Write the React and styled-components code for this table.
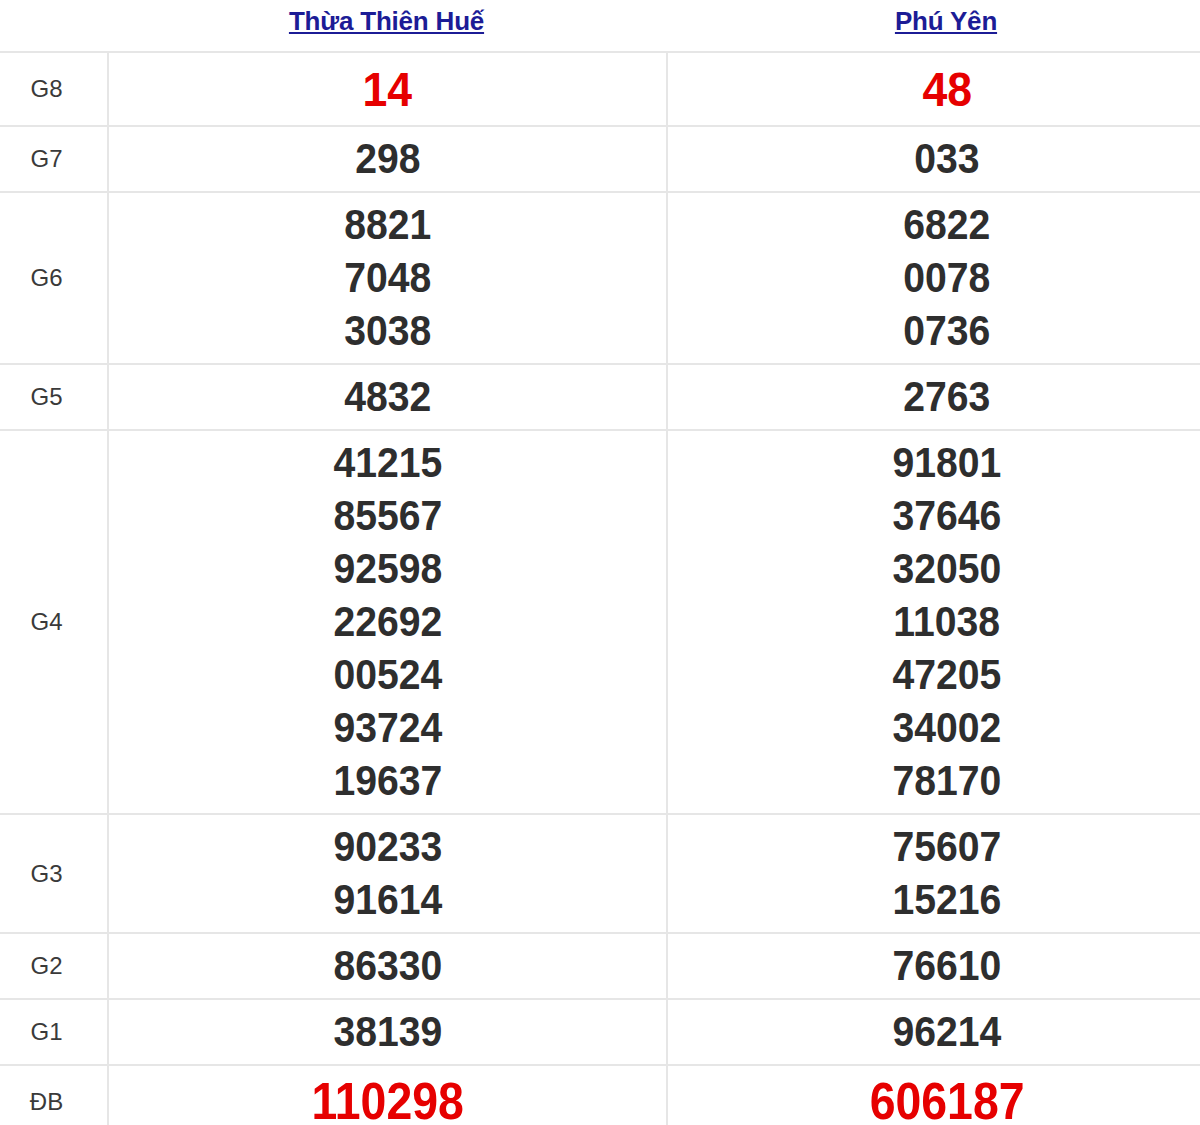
import React from "react";
import styled, { createGlobalStyle } from "styled-components";

const GlobalStyle = createGlobalStyle`
  html, body {
    margin: 0;
    padding: 0;
    background: #fff;
    overflow: hidden;
  }
  body {
    font-family: "Liberation Sans", Arial, sans-serif;
  }
`;

const Table = styled.div`
  width: 1226px;
  display: flex;
  flex-direction: column;
`;

const Row = styled.div`
  display: grid;
  grid-template-columns: 107px 559px 560px;
  border-bottom: 2px solid #e6e6e6;
`;

const HeaderRow = styled(Row)`
  height: 51px;
`;

const HeadCell = styled.div`
  display: flex;
  justify-content: center;
  padding-top: 6px;
`;

const ProvinceLink = styled.a.attrs({
  href: "#",
  onClick: (evt) => {
    evt.preventDefault();
  },
})`
  color: #1c1c96;
  font-size: 26px;
  font-weight: 700;
  line-height: 30px;
  letter-spacing: -0.2px;
  text-decoration: underline;
  text-underline-offset: 2px;
`;

const Label = styled.div`
  display: flex;
  align-items: center;
  justify-content: center;
  padding-right: 14px;
  font-size: 24px;
  color: #3a3a3a;
`;

const Cell = styled.div`
  display: flex;
  flex-direction: column;
  align-items: center;
  justify-content: center;
  border-left: 2px solid #e6e6e6;
  padding: ${(p) => (p.$big ? "5px 0" : "5px 0 6px")};
`;

const Num = styled.span`
  display: block;
  font-weight: 700;
  font-size: ${(p) => (p.$size ? p.$size : 43)}px;
  line-height: ${(p) => (p.$big ? 62 : 53)}px;
  color: ${(p) => (p.$red ? "#e60000" : "#2e2e2e")};
  transform: scaleX(0.91);
`;

const provinces = ["Thừa Thiên Huế", "Phú Yên"];

const prizes = [
  { name: "G8", values: [["14"], ["48"]], red: true, size: 49, big: true },
  { name: "G7", values: [["298"], ["033"]] },
  { name: "G6", values: [["8821", "7048", "3038"], ["6822", "0078", "0736"]] },
  { name: "G5", values: [["4832"], ["2763"]] },
  {
    name: "G4",
    values: [
      ["41215", "85567", "92598", "22692", "00524", "93724", "19637"],
      ["91801", "37646", "32050", "11038", "47205", "34002", "78170"],
    ],
  },
  { name: "G3", values: [["90233", "91614"], ["75607", "15216"]] },
  { name: "G2", values: [["86330"], ["76610"]] },
  { name: "G1", values: [["38139"], ["96214"]] },
  { name: "ĐB", values: [["110298"], ["606187"]], red: true, size: 51, big: true },
];

const App = () => {
  return (
    <>
      <GlobalStyle />
      <Table>
        <HeaderRow>
          <div />
          {provinces.map((p) => (
            <HeadCell key={p}>
              <ProvinceLink>{p}</ProvinceLink>
            </HeadCell>
          ))}
        </HeaderRow>
        {prizes.map((prize) => (
          <Row key={prize.name}>
            <Label>{prize.name}</Label>
            {prize.values.map((col, i) => (
              <Cell key={i} $big={prize.big}>
                {col.map((v) => (
                  <Num key={v} $red={prize.red} $size={prize.size} $big={prize.big}>
                    {v}
                  </Num>
                ))}
              </Cell>
            ))}
          </Row>
        ))}
      </Table>
    </>
  );
};

export default App;
